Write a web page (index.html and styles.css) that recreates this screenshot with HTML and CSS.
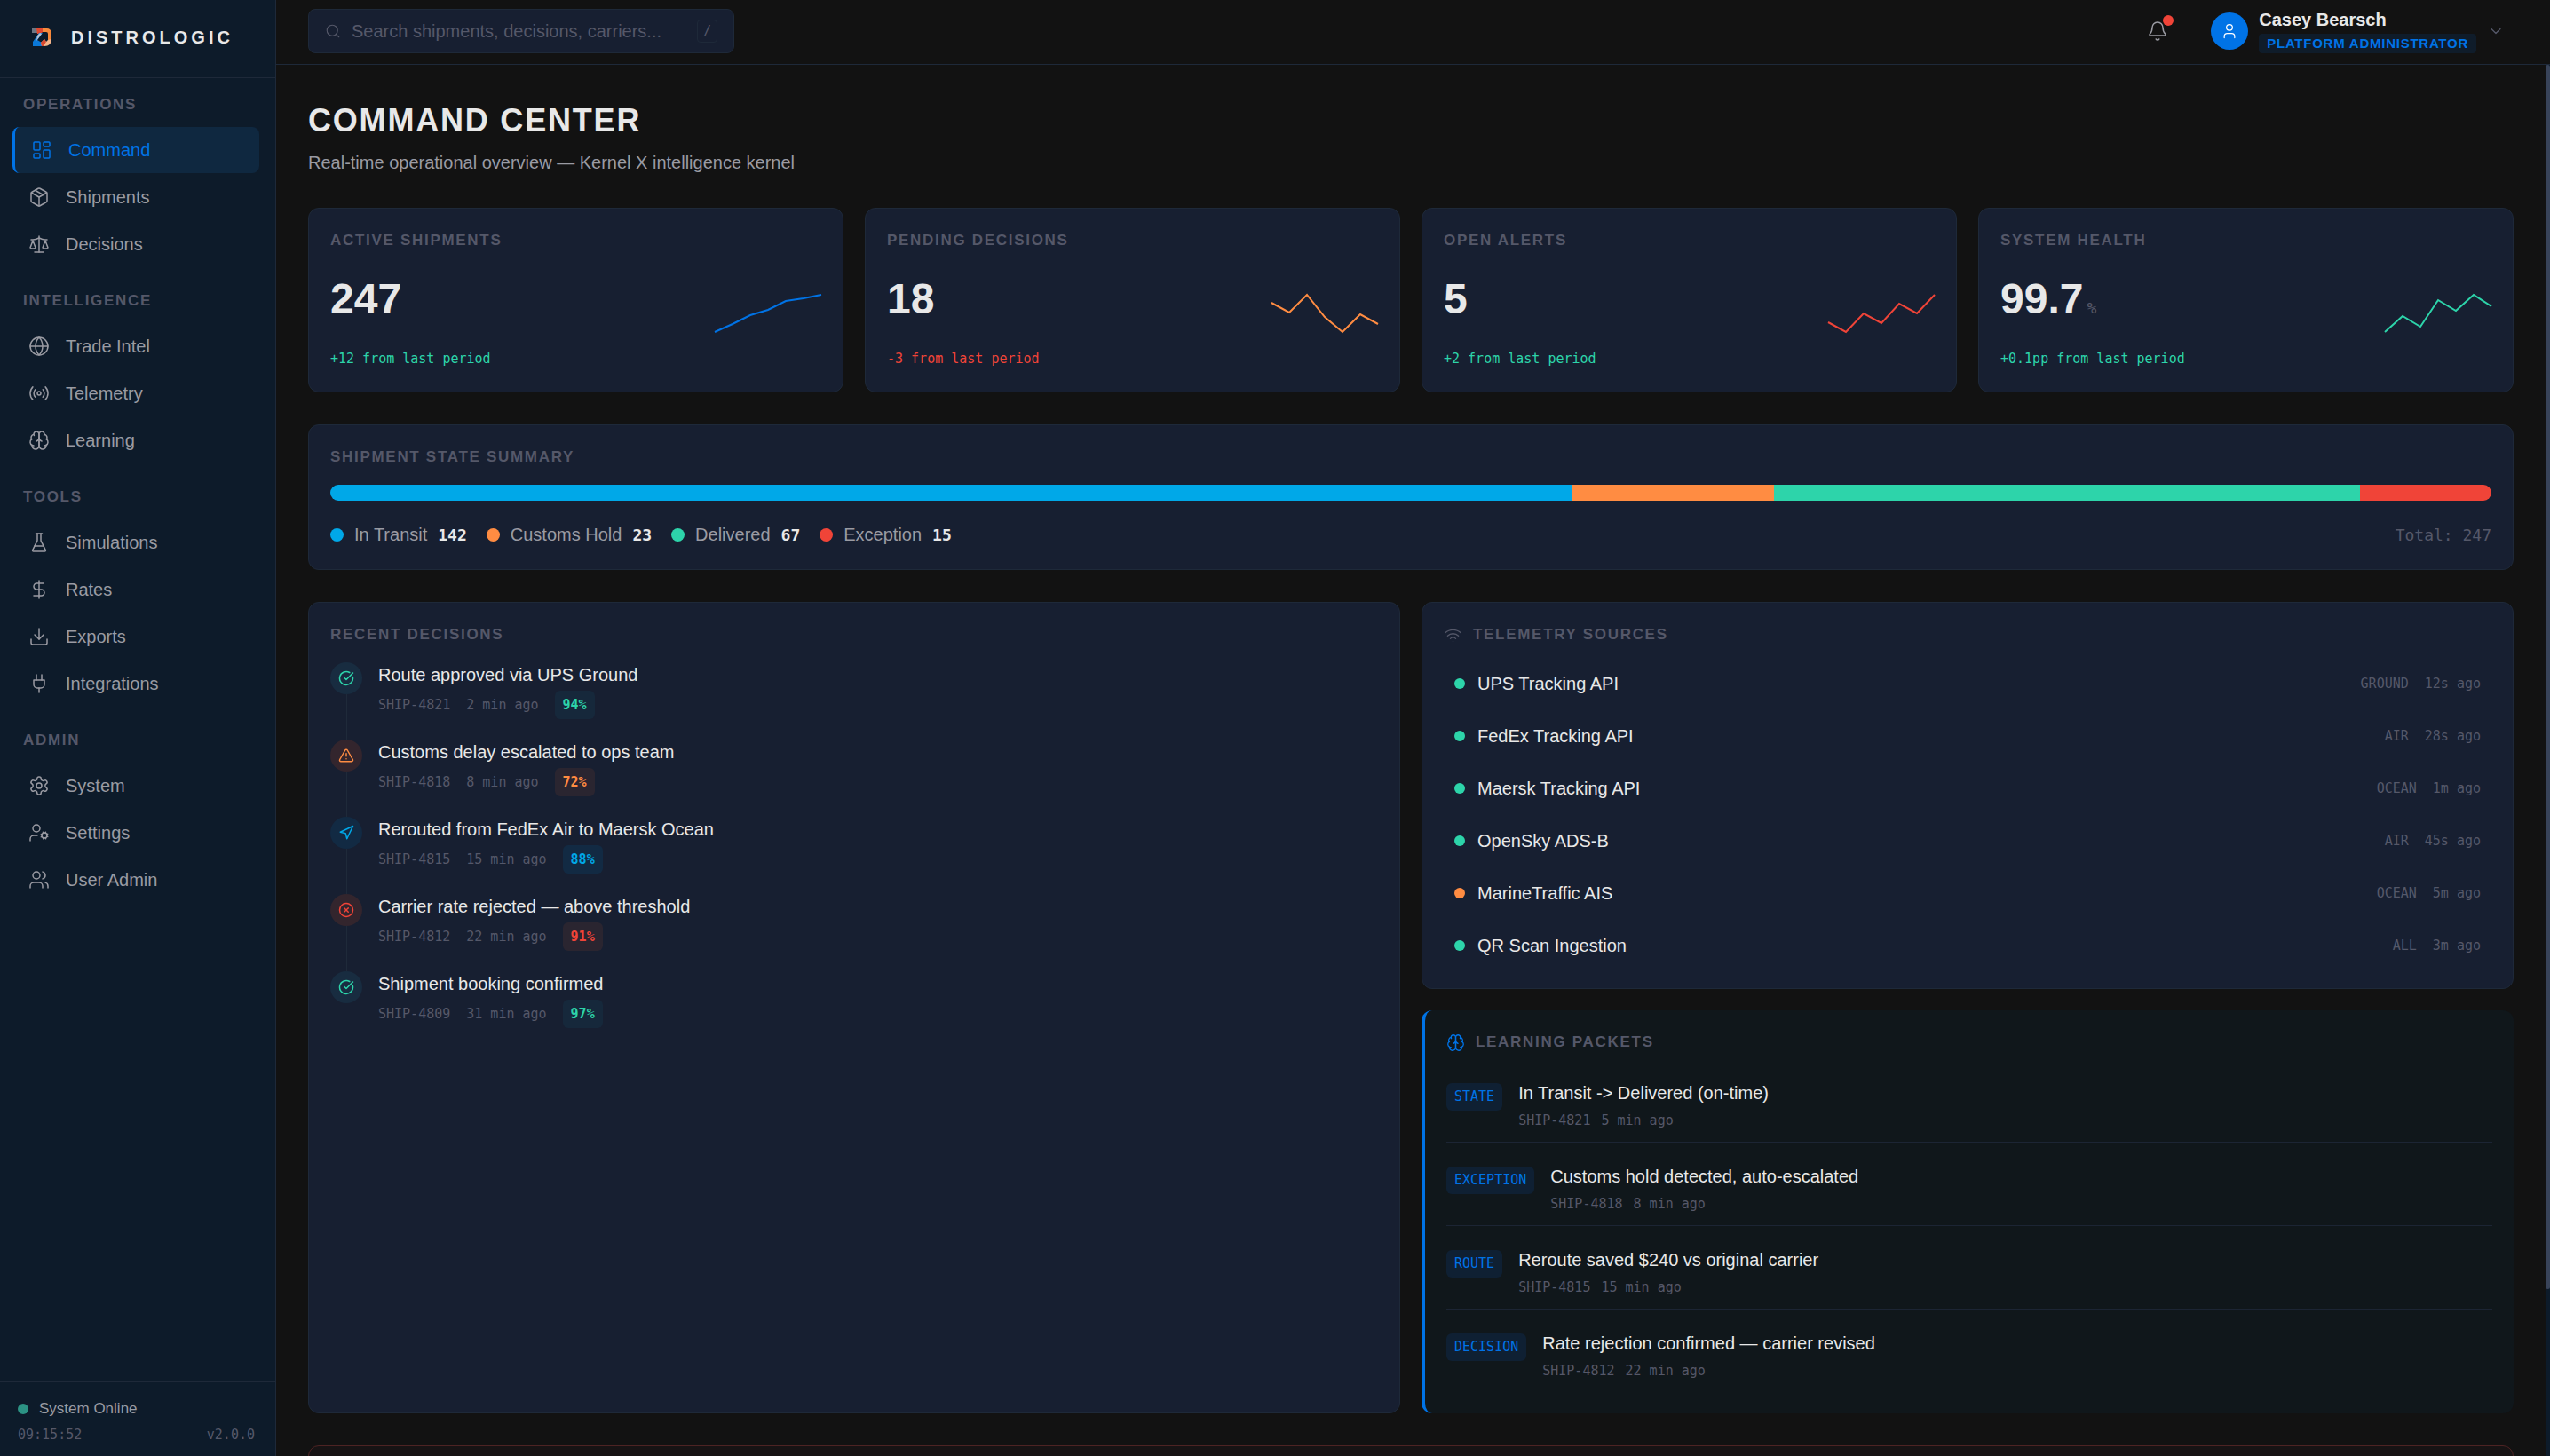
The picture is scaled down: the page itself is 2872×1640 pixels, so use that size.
FILE: index.html
```html
<!DOCTYPE html>
<html lang="en">
<head>
  <meta charset="UTF-8" />
  <meta name="viewport" content="width=device-width, initial-scale=1.0"/>
  <title>Distrologic</title>
  <link rel="stylesheet" href="styles.css">
</head>
<body>
  <!-- icon sprite -->
  <svg class="sprite" aria-hidden="true">
    <symbol id="i-dashboard" viewBox="0 0 24 24"><rect x="3" y="3" width="7" height="9" rx="1"/><rect x="14" y="3" width="7" height="5" rx="1"/><rect x="14" y="12" width="7" height="9" rx="1"/><rect x="3" y="16" width="7" height="5" rx="1"/></symbol>
    <symbol id="i-package" viewBox="0 0 24 24"><path d="M11 21.73a2 2 0 0 0 2 0l7-4A2 2 0 0 0 21 16V8a2 2 0 0 0-1-1.73l-7-4a2 2 0 0 0-2 0l-7 4A2 2 0 0 0 3 8v8a2 2 0 0 0 1 1.73z"/><path d="M12 22V12"/><path d="M3.3 7 12 12l8.7-5"/><path d="m7.5 4.27 9 5.15"/></symbol>
    <symbol id="i-scale" viewBox="0 0 24 24"><path d="m16 16 3-8 3 8c-.87.65-1.92 1-3 1s-2.13-.35-3-1Z"/><path d="m2 16 3-8 3 8c-.87.65-1.92 1-3 1s-2.13-.35-3-1Z"/><path d="M7 21h10"/><path d="M12 3v18"/><path d="M3 7h2c2 0 5-1 7-2 2 1 5 2 7 2h2"/></symbol>
    <symbol id="i-globe" viewBox="0 0 24 24"><circle cx="12" cy="12" r="10"/><path d="M12 2a14.5 14.5 0 0 0 0 20 14.5 14.5 0 0 0 0-20"/><path d="M2 12h20"/></symbol>
    <symbol id="i-radio" viewBox="0 0 24 24"><path d="M4.9 19.1C1 15.2 1 8.8 4.9 4.9"/><path d="M7.8 16.2c-2.3-2.3-2.3-6.1 0-8.5"/><circle cx="12" cy="12" r="2"/><path d="M16.2 7.8c2.3 2.3 2.3 6.1 0 8.5"/><path d="M19.1 4.9C23 8.8 23 15.1 19.1 19"/></symbol>
    <symbol id="i-brain" viewBox="0 0 24 24"><path d="M12 5a3 3 0 1 0-5.997.125 4 4 0 0 0-2.526 5.77 4 4 0 0 0 .556 6.588A4 4 0 1 0 12 18Z"/><path d="M12 5a3 3 0 1 1 5.997.125 4 4 0 0 1 2.526 5.77 4 4 0 0 1-.556 6.588A4 4 0 1 1 12 18Z"/><path d="M15 13a4.5 4.5 0 0 1-3-4 4.5 4.5 0 0 1-3 4"/><path d="M17.599 6.5a3 3 0 0 0 .399-1.375"/><path d="M6.003 5.125A3 3 0 0 0 6.401 6.5"/><path d="M3.477 10.896a4 4 0 0 1 .585-.396"/><path d="M19.938 10.5a4 4 0 0 1 .585.396"/><path d="M6 18a4 4 0 0 1-1.967-.516"/><path d="M19.967 17.484A4 4 0 0 1 18 18"/></symbol>
    <symbol id="i-flask" viewBox="0 0 24 24"><path d="M10 2v7.53a2 2 0 0 1-.21.9L4.72 20.55a1 1 0 0 0 .9 1.45h12.76a1 1 0 0 0 .9-1.45l-5.07-10.12a2 2 0 0 1-.21-.9V2"/><path d="M8.5 2h7"/><path d="M7 16h10"/></symbol>
    <symbol id="i-dollar" viewBox="0 0 24 24"><path d="M12 2v20"/><path d="M17 5H9.5a3.5 3.5 0 0 0 0 7h5a3.5 3.5 0 0 1 0 7H6"/></symbol>
    <symbol id="i-download" viewBox="0 0 24 24"><path d="M21 15v4a2 2 0 0 1-2 2H5a2 2 0 0 1-2-2v-4"/><path d="m7 10 5 5 5-5"/><path d="M12 15V3"/></symbol>
    <symbol id="i-plug" viewBox="0 0 24 24"><path d="M12 22v-5"/><path d="M9 8V2"/><path d="M15 8V2"/><path d="M18 8v5a4 4 0 0 1-4 4h-4a4 4 0 0 1-4-4V8Z"/></symbol>
    <symbol id="i-gear" viewBox="0 0 24 24"><path d="M12.22 2h-.44a2 2 0 0 0-2 2v.18a2 2 0 0 1-1 1.73l-.43.25a2 2 0 0 1-2 0l-.15-.08a2 2 0 0 0-2.73.73l-.22.38a2 2 0 0 0 .73 2.73l.15.1a2 2 0 0 1 1 1.72v.51a2 2 0 0 1-1 1.74l-.15.09a2 2 0 0 0-.73 2.73l.22.38a2 2 0 0 0 2.73.73l.15-.08a2 2 0 0 1 2 0l.43.25a2 2 0 0 1 1 1.73V20a2 2 0 0 0 2 2h.44a2 2 0 0 0 2-2v-.18a2 2 0 0 1 1-1.73l.43-.25a2 2 0 0 1 2 0l.15.08a2 2 0 0 0 2.73-.73l.22-.39a2 2 0 0 0-.73-2.73l-.15-.08a2 2 0 0 1-1-1.74v-.5a2 2 0 0 1 1-1.74l.15-.09a2 2 0 0 0 .73-2.73l-.22-.38a2 2 0 0 0-2.73-.73l-.15.08a2 2 0 0 1-2 0l-.43-.25a2 2 0 0 1-1-1.73V4a2 2 0 0 0-2-2z"/><circle cx="12" cy="12" r="3"/></symbol>
    <symbol id="i-user-cog" viewBox="0 0 24 24"><circle cx="9" cy="7" r="4"/><path d="M10 15H6a4 4 0 0 0-4 4v2"/><circle cx="18" cy="15" r="3"/><path d="m21.7 16.4-.9-.3"/><path d="m15.2 13.9-.9-.3"/><path d="m16.6 18.7.3-.9"/><path d="m19.1 12.2.3-.9"/><path d="m19.6 18.7-.4-1"/><path d="m16.8 12.3-.4-1"/><path d="m14.3 16.6 1-.4"/><path d="m20.7 13.8 1-.4"/></symbol>
    <symbol id="i-users" viewBox="0 0 24 24"><path d="M16 21v-2a4 4 0 0 0-4-4H6a4 4 0 0 0-4 4v2"/><circle cx="9" cy="7" r="4"/><path d="M22 21v-2a4 4 0 0 0-3-3.87"/><path d="M16 3.13a4 4 0 0 1 0 7.75"/></symbol>
    <symbol id="i-search" viewBox="0 0 24 24"><circle cx="11" cy="11" r="8"/><path d="m21 21-4.3-4.3"/></symbol>
    <symbol id="i-bell" viewBox="0 0 24 24"><path d="M10.268 21a2 2 0 0 0 3.464 0"/><path d="M3.262 15.326A1 1 0 0 0 4 17h16a1 1 0 0 0 .74-1.673C19.41 13.956 18 12.499 18 8A6 6 0 0 0 6 8c0 4.499-1.411 5.956-2.738 7.326"/></symbol>
    <symbol id="i-user" viewBox="0 0 24 24"><path d="M19 21v-2a4 4 0 0 0-4-4H9a4 4 0 0 0-4 4v2"/><circle cx="12" cy="7" r="4"/></symbol>
    <symbol id="i-chevron" viewBox="0 0 24 24"><path d="m6 9 6 6 6-6"/></symbol>
    <symbol id="i-wifi" viewBox="0 0 24 24"><path d="M12 20h.01"/><path d="M2 8.82a15 15 0 0 1 20 0"/><path d="M5 12.859a10 10 0 0 1 14 0"/><path d="M8.5 16.429a5 5 0 0 1 7 0"/></symbol>
    <symbol id="i-check" viewBox="0 0 24 24"><path d="M21.801 10A10 10 0 1 1 17 3.335"/><path d="m9 11 3 3L22 4"/></symbol>
    <symbol id="i-alert" viewBox="0 0 24 24"><path d="m21.73 18-8-14a2 2 0 0 0-3.48 0l-8 14A2 2 0 0 0 4 21h16a2 2 0 0 0 1.73-3"/><path d="M12 9v4"/><path d="M12 17h.01"/></symbol>
    <symbol id="i-navigation" viewBox="0 0 24 24"><path d="m3 11 19-9-9 19-2-8-8-2z"/></symbol>
    <symbol id="i-x" viewBox="0 0 24 24"><circle cx="12" cy="12" r="10"/><path d="m15 9-6 6"/><path d="m9 9 6 6"/></symbol>
  </svg>

  <div class="app">
    <aside class="sidebar">
      <div class="brand">
        <svg class="brand-mark" viewBox="0 0 22 20" aria-hidden="true">
          <path d="M0 0h6l3 5H0z" fill="#6d7683"/>
          <path d="M5 0h7v4l-2 2H6z" fill="#e2492f"/>
          <path d="M8 5h4L6 13l5 3v4H1v-5z" fill="#0a78d8"/>
          <path d="M6 8l3-3 2 1-6 8z" fill="#b9c3cf"/>
          <path d="M12 0h5a5 5 0 0 1 5 5v8l-4 3V6a2 2 0 0 0-2-2h-4z" fill="#f7893b"/>
          <path d="M22 12c0 5-3 8-8 8h-3l-1-4 4-4 2 3 2-2z" fill="#f5b58a"/>
          <path d="M10 16l4-4 2 3-3 5h-2z" fill="#d8482f"/>
        </svg>
        <span class="brand-name">DISTROLOGIC</span>
      </div>

      <nav class="nav">
        <section class="nav-group">
          <h2 class="nav-label">OPERATIONS</h2>
          <a class="nav-item active" href="#command"><svg class="icon"><use href="#i-dashboard"/></svg>Command</a>
          <a class="nav-item" href="#shipments"><svg class="icon"><use href="#i-package"/></svg>Shipments</a>
          <a class="nav-item" href="#decisions"><svg class="icon"><use href="#i-scale"/></svg>Decisions</a>
        </section>
        <section class="nav-group">
          <h2 class="nav-label">INTELLIGENCE</h2>
          <a class="nav-item" href="#trade"><svg class="icon"><use href="#i-globe"/></svg>Trade Intel</a>
          <a class="nav-item" href="#telemetry"><svg class="icon"><use href="#i-radio"/></svg>Telemetry</a>
          <a class="nav-item" href="#learning"><svg class="icon"><use href="#i-brain"/></svg>Learning</a>
        </section>
        <section class="nav-group">
          <h2 class="nav-label">TOOLS</h2>
          <a class="nav-item" href="#simulations"><svg class="icon"><use href="#i-flask"/></svg>Simulations</a>
          <a class="nav-item" href="#rates"><svg class="icon"><use href="#i-dollar"/></svg>Rates</a>
          <a class="nav-item" href="#exports"><svg class="icon"><use href="#i-download"/></svg>Exports</a>
          <a class="nav-item" href="#integrations"><svg class="icon"><use href="#i-plug"/></svg>Integrations</a>
        </section>
        <section class="nav-group">
          <h2 class="nav-label">ADMIN</h2>
          <a class="nav-item" href="#system"><svg class="icon"><use href="#i-gear"/></svg>System</a>
          <a class="nav-item" href="#settings"><svg class="icon"><use href="#i-user-cog"/></svg>Settings</a>
          <a class="nav-item" href="#users"><svg class="icon"><use href="#i-users"/></svg>User Admin</a>
        </section>
      </nav>

      <footer class="sidebar-footer">
        <div class="status"><span class="dot online"></span>System Online</div>
        <div class="build"><span>09:15:52</span><span>v2.0.0</span></div>
      </footer>
    </aside>

    <div class="content">
      <header class="topbar">
        <label class="search">
          <svg class="icon"><use href="#i-search"/></svg>
          <input type="search" placeholder="Search shipments, decisions, carriers..." aria-label="Search">
          <kbd>/</kbd>
        </label>
        <div class="topbar-right">
          <button class="bell" aria-label="Notifications"><svg class="icon"><use href="#i-bell"/></svg><span class="bell-dot"></span></button>
          <button class="user">
            <span class="avatar"><svg class="icon"><use href="#i-user"/></svg></span>
            <span class="user-text">
              <span class="user-name">Casey Bearsch</span>
              <span class="user-role">PLATFORM ADMINISTRATOR</span>
            </span>
            <svg class="icon chevron"><use href="#i-chevron"/></svg>
          </button>
        </div>
      </header>

      <div class="viewport">
        <main class="main">
          <div class="page-head">
            <h1>COMMAND CENTER</h1>
            <p>Real-time operational overview — Kernel X intelligence kernel</p>
          </div>

          <div class="stats">
            <article class="card">
              <h2 class="label">ACTIVE SHIPMENTS</h2>
              <div class="stat-row">
                <div class="stat-value">247</div>
                <svg class="spark blue" viewBox="0 0 120 48"><polyline points="0,45 20,36 40,26 60,20 80,10 100,7 120,3"/></svg>
              </div>
              <div class="delta green">+12 from last period</div>
            </article>
            <article class="card">
              <h2 class="label">PENDING DECISIONS</h2>
              <div class="stat-row">
                <div class="stat-value">18</div>
                <svg class="spark orange" viewBox="0 0 120 48"><polyline points="0,12 20,23 40,3 60,28 80,45 100,25 120,36"/></svg>
              </div>
              <div class="delta red">-3 from last period</div>
            </article>
            <article class="card">
              <h2 class="label">OPEN ALERTS</h2>
              <div class="stat-row">
                <div class="stat-value">5</div>
                <svg class="spark red" viewBox="0 0 120 48"><polyline points="0,34 20,45 40,24 60,35 80,13 100,24 120,3"/></svg>
              </div>
              <div class="delta green">+2 from last period</div>
            </article>
            <article class="card">
              <h2 class="label">SYSTEM HEALTH</h2>
              <div class="stat-row">
                <div class="stat-value">99.7<span class="unit">%</span></div>
                <svg class="spark green" viewBox="0 0 120 48"><polyline points="0,45 20,27 40,39 60,9 80,21 100,3 120,16"/></svg>
              </div>
              <div class="delta green">+0.1pp from last period</div>
            </article>
          </div>

          <section class="card">
            <h2 class="label">SHIPMENT STATE SUMMARY</h2>
            <div class="bar">
              <div class="bg-sky" style="width: 57.49%"></div>
              <div class="bg-orange" style="width: 9.31%"></div>
              <div class="bg-green" style="width: 27.13%"></div>
              <div class="bg-red" style="width: 6.07%"></div>
            </div>
            <div class="legend">
              <div class="legend-item"><span class="swatch bg-sky"></span>In Transit<b>142</b></div>
              <div class="legend-item"><span class="swatch bg-orange"></span>Customs Hold<b>23</b></div>
              <div class="legend-item"><span class="swatch bg-green"></span>Delivered<b>67</b></div>
              <div class="legend-item"><span class="swatch bg-red"></span>Exception<b>15</b></div>
              <div class="legend-total">Total: 247</div>
            </div>
          </section>

          <div class="panels">
            <section class="card">
              <h2 class="label">RECENT DECISIONS</h2>
              <ol class="timeline">
                <li class="event green">
                  <div class="rail"><span class="event-icon"><svg class="icon"><use href="#i-check"/></svg></span></div>
                  <div class="event-body">
                    <div class="title">Route approved via UPS Ground</div>
                    <div class="meta"><span>SHIP-4821</span><span>2 min ago</span><span class="score">94%</span></div>
                  </div>
                </li>
                <li class="event orange">
                  <div class="rail"><span class="event-icon"><svg class="icon"><use href="#i-alert"/></svg></span></div>
                  <div class="event-body">
                    <div class="title">Customs delay escalated to ops team</div>
                    <div class="meta"><span>SHIP-4818</span><span>8 min ago</span><span class="score">72%</span></div>
                  </div>
                </li>
                <li class="event sky">
                  <div class="rail"><span class="event-icon"><svg class="icon"><use href="#i-navigation"/></svg></span></div>
                  <div class="event-body">
                    <div class="title">Rerouted from FedEx Air to Maersk Ocean</div>
                    <div class="meta"><span>SHIP-4815</span><span>15 min ago</span><span class="score">88%</span></div>
                  </div>
                </li>
                <li class="event red">
                  <div class="rail"><span class="event-icon"><svg class="icon"><use href="#i-x"/></svg></span></div>
                  <div class="event-body">
                    <div class="title">Carrier rate rejected — above threshold</div>
                    <div class="meta"><span>SHIP-4812</span><span>22 min ago</span><span class="score">91%</span></div>
                  </div>
                </li>
                <li class="event green">
                  <div class="rail"><span class="event-icon"><svg class="icon"><use href="#i-check"/></svg></span></div>
                  <div class="event-body">
                    <div class="title">Shipment booking confirmed</div>
                    <div class="meta"><span>SHIP-4809</span><span>31 min ago</span><span class="score">97%</span></div>
                  </div>
                </li>
              </ol>
            </section>

            <div class="panel-stack">
              <section class="card">
                <h2 class="label"><svg class="icon"><use href="#i-wifi"/></svg>TELEMETRY SOURCES</h2>
                <ul class="sources">
                  <li><span class="dot bg-green"></span><span class="title">UPS Tracking API</span><span class="mode">GROUND</span><span>12s ago</span></li>
                  <li><span class="dot bg-green"></span><span class="title">FedEx Tracking API</span><span class="mode">AIR</span><span>28s ago</span></li>
                  <li><span class="dot bg-green"></span><span class="title">Maersk Tracking API</span><span class="mode">OCEAN</span><span>1m ago</span></li>
                  <li><span class="dot bg-green"></span><span class="title">OpenSky ADS-B</span><span class="mode">AIR</span><span>45s ago</span></li>
                  <li><span class="dot bg-orange"></span><span class="title">MarineTraffic AIS</span><span class="mode">OCEAN</span><span>5m ago</span></li>
                  <li><span class="dot bg-green"></span><span class="title">QR Scan Ingestion</span><span class="mode">ALL</span><span>3m ago</span></li>
                </ul>
              </section>

              <section class="card learning">
                <h2 class="label"><svg class="icon"><use href="#i-brain"/></svg>LEARNING PACKETS</h2>
                <ul class="packets">
                  <li>
                    <span class="tag">STATE</span>
                    <div>
                      <div class="title">In Transit -&gt; Delivered (on-time)</div>
                      <div class="meta"><span>SHIP-4821</span><span>5 min ago</span></div>
                    </div>
                  </li>
                  <li>
                    <span class="tag">EXCEPTION</span>
                    <div>
                      <div class="title">Customs hold detected, auto-escalated</div>
                      <div class="meta"><span>SHIP-4818</span><span>8 min ago</span></div>
                    </div>
                  </li>
                  <li>
                    <span class="tag">ROUTE</span>
                    <div>
                      <div class="title">Reroute saved $240 vs original carrier</div>
                      <div class="meta"><span>SHIP-4815</span><span>15 min ago</span></div>
                    </div>
                  </li>
                  <li>
                    <span class="tag">DECISION</span>
                    <div>
                      <div class="title">Rate rejection confirmed — carrier revised</div>
                      <div class="meta"><span>SHIP-4812</span><span>22 min ago</span></div>
                    </div>
                  </li>
                </ul>
              </section>
            </div>
          </div>

          <section class="card alerts"></section>
        </main>
        <div class="scrollbar"><div class="thumb"></div></div>
      </div>
    </div>
  </div>
</body>
</html>
```
FILE: styles.css
```css
:root {
  --bg: #121212;
  --navy: #0d1b2a;
  --card: #171f31;
  --border: #1e2939;
  --text: #e8e8e8;
  --text-soft: #9a9ba3;
  --muted: #555869;
  --primary: #0073e6;
  --sky: #00a8e8;
  --orange: #ff8c42;
  --green: #2dd4aa;
  --red: #f04438;
  --mono: "DejaVu Sans Mono", monospace;
}

* {
  box-sizing: border-box;
  margin: 0;
  padding: 0;
}

body {
  background: var(--bg);
  color: var(--text);
  font-family: "Liberation Sans", Arial, sans-serif;
  font-size: 20px;
  line-height: 28px;
}

ul, ol {
  list-style: none;
}

a {
  text-decoration: none;
}

button {
  background: none;
  border: none;
  color: inherit;
  font: inherit;
  cursor: pointer;
}

.sprite {
  display: none;
}

.icon {
  width: 24px;
  height: 24px;
  flex-shrink: 0;
  fill: none;
  stroke: currentColor;
  stroke-width: 1.5;
  stroke-linecap: round;
  stroke-linejoin: round;
}

.dot {
  width: 12px;
  height: 12px;
  border-radius: 50%;
  flex-shrink: 0;
}

.app {
  display: flex;
  height: 100vh;
}

/* sidebar */
.sidebar {
  width: 311px;
  flex-shrink: 0;
  display: flex;
  flex-direction: column;
  background: var(--navy);
  border-right: 1px solid var(--border);
}

.brand {
  display: flex;
  align-items: center;
  gap: 22px;
  padding: 28px 36px 31px;
  border-bottom: 1px solid var(--border);
}

.brand-mark {
  width: 22px;
  height: 20px;
}

.brand-name {
  font-weight: bold;
  letter-spacing: 0.2em;
}

.nav {
  flex: 1;
  padding: 18px 18px 18px 14px;
  overflow: hidden;
}

.nav-group {
  display: flex;
  flex-direction: column;
  gap: 1px;
  margin-bottom: 26px;
}

.nav-label {
  padding-left: 12px;
  margin-bottom: 12px;
  color: var(--muted);
  font-size: 17px;
  line-height: 24px;
  letter-spacing: 0.1em;
}

.nav-item {
  display: flex;
  align-items: center;
  gap: 18px;
  height: 52px;
  padding: 0 18px;
  border-radius: 8px;
  color: var(--text-soft);
}

.nav-item.active {
  background: #0f2840;
  border-left: 3px solid var(--primary);
  color: var(--primary);
}

.sidebar-footer {
  padding: 18px 23px 12px 20px;
  border-top: 1px solid var(--border);
}

.status {
  display: flex;
  align-items: center;
  gap: 12px;
  color: var(--text-soft);
  font-size: 17px;
  line-height: 24px;
}

.online {
  background: #2c9384;
}

.build {
  display: flex;
  justify-content: space-between;
  margin-top: 5px;
  color: var(--muted);
  font: 15px/24px var(--mono);
}

/* top bar */
.content {
  flex: 1;
  min-width: 0;
  display: flex;
  flex-direction: column;
}

.topbar {
  display: flex;
  align-items: center;
  justify-content: space-between;
  padding: 10px 36px 12px;
  border-bottom: 1px solid var(--border);
}

.search {
  display: flex;
  align-items: center;
  gap: 12px;
  width: 480px;
  height: 50px;
  padding: 0 18px;
  background: var(--card);
  border: 1px solid var(--border);
  border-radius: 8px;
  color: var(--muted);
}

.search .icon {
  width: 18px;
  height: 18px;
}

.search input {
  flex: 1;
  min-width: 0;
  background: none;
  border: none;
  outline: none;
  color: var(--text);
  font: inherit;
}

.search input::placeholder {
  color: var(--muted);
}

.search kbd {
  padding: 0 6px;
  border: 1px solid var(--border);
  border-radius: 4px;
  font: 15px/24px var(--mono);
}

.topbar-right {
  display: flex;
  align-items: center;
  gap: 24px;
}

.bell {
  position: relative;
  display: flex;
  padding: 9px;
  color: var(--text-soft);
}

.bell-dot {
  position: absolute;
  top: 3px;
  right: 3px;
  width: 12px;
  height: 12px;
  border-radius: 50%;
  background: var(--red);
}

.user {
  display: flex;
  align-items: center;
  gap: 12px;
  padding: 0 15px;
  text-align: left;
}

.avatar {
  display: flex;
  align-items: center;
  justify-content: center;
  width: 42px;
  height: 42px;
  border-radius: 50%;
  background: var(--primary);
  color: #fff;
}

.avatar .icon {
  width: 20px;
  height: 20px;
}

.user-text {
  display: flex;
  flex-direction: column;
  gap: 4px;
}

.user-name {
  font-weight: bold;
  line-height: 24px;
}

.user-role {
  padding: 0 9px;
  border-radius: 4px;
  background: #0f1c2a;
  color: var(--primary);
  font-size: 15px;
  font-weight: bold;
  line-height: 22px;
  letter-spacing: 0.05em;
}

.chevron {
  width: 20px;
  height: 20px;
  color: var(--muted);
}

/* main area */
.viewport {
  flex: 1;
  min-height: 0;
  display: flex;
  overflow: hidden;
}

.scrollbar {
  width: 5px;
  flex-shrink: 0;
  background: var(--navy);
}

.thumb {
  height: 88%;
  border-radius: 3px;
  background: #384359;
}

.main {
  flex: 1;
  min-width: 0;
  display: flex;
  flex-direction: column;
  gap: 36px;
  padding: 36px;
}

.page-head h1 {
  font-size: 36px;
  line-height: 54px;
  letter-spacing: 0.05em;
}

.page-head p {
  margin-top: 6px;
  color: var(--text-soft);
  line-height: 29px;
}

.card {
  padding: 24px;
  background: var(--card);
  border: 1px solid var(--border);
  border-radius: 12px;
}

.label {
  display: flex;
  align-items: center;
  gap: 12px;
  color: var(--muted);
  font-size: 17px;
  line-height: 24px;
  letter-spacing: 0.1em;
}

.label .icon {
  width: 21px;
  height: 21px;
}

.stats {
  display: grid;
  grid-template-columns: repeat(4, 1fr);
  gap: 24px;
}

.stat-row {
  display: flex;
  justify-content: space-between;
  margin: 30px 0 15px;
}

.stat-value {
  font-size: 48px;
  font-weight: bold;
  line-height: 48px;
}

.unit {
  margin-left: 4px;
  color: var(--muted);
  font-family: var(--mono);
  font-size: 18px;
  font-weight: normal;
}

.spark {
  width: 120px;
  height: 48px;
  margin-top: 16px;
  overflow: visible;
  fill: none;
  stroke: currentColor;
  stroke-width: 2;
}

.delta {
  font: 15px/25px var(--mono);
}

.blue { color: var(--primary); }
.sky { color: var(--sky); }
.orange { color: var(--orange); }
.green { color: var(--green); }
.red { color: var(--red); }

.bg-sky { background: var(--sky); }
.bg-orange { background: var(--orange); }
.bg-green { background: var(--green); }
.bg-red { background: var(--red); }

.bar {
  display: flex;
  height: 18px;
  margin: 19px 0 24px;
  border-radius: 9px;
  overflow: hidden;
}

.legend {
  display: flex;
  gap: 22px;
  color: var(--text-soft);
  line-height: 29px;
}

.legend-item {
  display: flex;
  align-items: center;
  gap: 12px;
}

.legend-item b {
  color: var(--text);
  font-family: var(--mono);
  font-size: 18px;
}

.swatch {
  width: 15px;
  height: 15px;
  border-radius: 50%;
}

.legend-total {
  margin-left: auto;
  color: var(--muted);
  font-family: var(--mono);
  font-size: 18px;
}

.panels {
  display: grid;
  grid-template-columns: 1fr 1fr;
  gap: 24px;
}

.panel-stack {
  display: flex;
  flex-direction: column;
  gap: 24px;
}

.title {
  color: var(--text);
}

.meta {
  display: flex;
  align-items: center;
  color: var(--muted);
  font: 15px/24px var(--mono);
}

.timeline,
.sources,
.packets {
  margin-top: 19px;
}

.event {
  display: flex;
  gap: 18px;
}

.rail {
  display: flex;
  flex-direction: column;
  align-items: center;
}

.event:not(:last-child) .rail::after {
  content: "";
  flex: 1;
  width: 1px;
  background: #1f2a3a;
}

.event-icon {
  display: flex;
  align-items: center;
  justify-content: center;
  width: 36px;
  height: 36px;
  border-radius: 50%;
  background: #182c40;
}

.event-icon .icon {
  width: 18px;
  height: 18px;
  stroke-width: 2;
}

.event-body {
  padding-bottom: 23px;
}

.event .meta {
  gap: 18px;
  margin-top: 4px;
}

.score {
  padding: 4px 9px;
  border-radius: 6px;
  background: #16283b;
  font-weight: bold;
}

.green .score { color: var(--green); }
.sky .score { color: var(--sky); }
.orange .score { color: var(--orange); }
.red .score { color: var(--red); }

.sky .event-icon,
.sky .score {
  background: #122a43;
}

.orange .event-icon,
.red .event-icon {
  background: #33252d;
}

.orange .score,
.red .score {
  background: #2a2530;
}

.sources {
  display: flex;
  flex-direction: column;
  gap: 11px;
}

.sources li {
  display: flex;
  align-items: center;
  height: 48px;
  padding: 0 12px;
  color: var(--muted);
  font: 15px/24px var(--mono);
}

.sources .title {
  margin-left: 14px;
  font: 20px/28px "Liberation Sans", Arial, sans-serif;
}

.mode {
  margin: 0 18px 0 auto;
}

.learning {
  background: #10171b;
  border: none;
  border-left: 4px solid var(--primary);
}

.learning .label .icon {
  color: var(--primary);
}

.packets {
  display: flex;
  flex-direction: column;
  gap: 12px;
}

.packets li {
  display: flex;
  align-items: flex-start;
  gap: 18px;
  padding: 12px 0;
}

.packets li:not(:last-child) {
  border-bottom: 1px solid #1c2534;
}

.packets .title {
  line-height: 29px;
}

.packets .meta {
  gap: 12px;
  margin-top: 4px;
}

.tag {
  margin-top: 3px;
  padding: 3px 9px;
  border-radius: 6px;
  background: #0f2033;
  color: var(--primary);
  font: 15px/25px var(--mono);
}

.alerts {
  min-height: 190px;
  background: #171314;
  border-color: #4d2323;
}
```
